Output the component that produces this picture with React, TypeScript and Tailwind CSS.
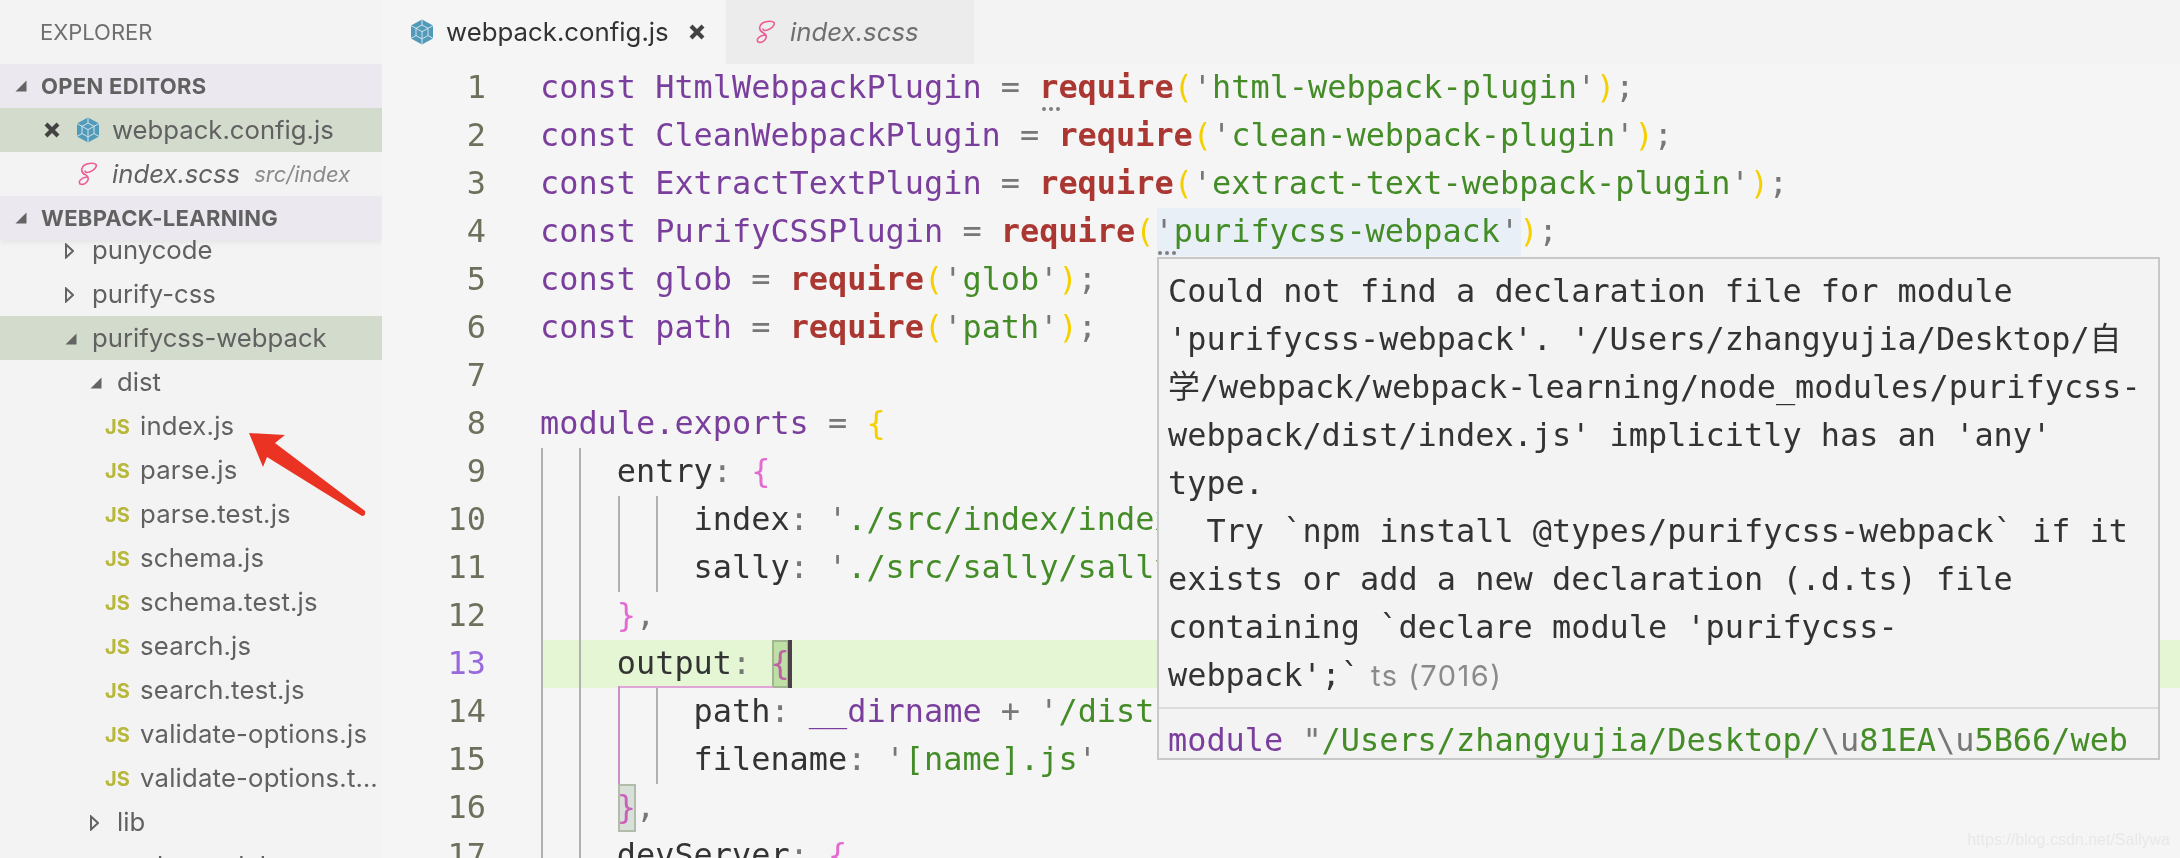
import React from "react";

const MONO = { fontFamily: '"DejaVu Sans Mono", "Noto Sans CJK SC", monospace' };

type Tok = [string, string];
const P = "text-[#7a3e9d]";
const G = "text-[#777777]";
const R = "text-[#aa3731] font-bold";
const S = "text-[#448c27]";
const Y = "text-[#f5d000]";
const K = "text-[#e36ad0]";
const D = "text-[#333333]";

const req = (name: string): Tok[] => [
  ["require", R],
  ["(", Y],
  ["'", G],
  [name, S],
  ["'", G],
  [")", Y],
  [";", G],
];

const decl = (a: string, name: string): Tok[] => [
  ["const ", P],
  [a, P],
  [" = ", G],
  ...req(name),
];

const lines: Tok[][] = [
  decl("HtmlWebpackPlugin", "html-webpack-plugin"),
  decl("CleanWebpackPlugin", "clean-webpack-plugin"),
  decl("ExtractTextPlugin", "extract-text-webpack-plugin"),
  decl("PurifyCSSPlugin", "purifycss-webpack"),
  decl("glob", "glob"),
  decl("path", "path"),
  [],
  [["module.exports", P], [" = ", G], ["{", Y]],
  [["    entry", D], [": ", G], ["{", K]],
  [["        index", D], [": ", G], ["'", G], ["./src/index/index.js", S], ["'", G], [",", G]],
  [["        sally", D], [": ", G], ["'", G], ["./src/sally/sally.js", S], ["'", G]],
  [["    ", D], ["}", K], [",", G]],
  [["    output", D], [": ", G], ["{", K]],
  [["        path", D], [": ", G], ["__dirname", P], [" + ", G], ["'", G], ["/dist", S], ["'", G], [",", G]],
  [["        filename", D], [": ", G], ["'", G], ["[name].js", S], ["'", G]],
  [["    ", D], ["}", K], [",", G]],
  [["    devServer", D], [": ", G], ["{", K]],
];

const guides: Record<number, string[]> = {
  9: ["left-0", "left-[38px]"],
  10: ["left-0", "left-[38px]", "left-[77px]", "left-[115px]"],
  11: ["left-0", "left-[38px]", "left-[77px]", "left-[115px]"],
  12: ["left-0", "left-[38px]"],
  13: ["left-0", "left-[38px]"],
  14: ["left-0", "left-[38px]", "left-[115px]"],
  15: ["left-0", "left-[38px]", "left-[115px]"],
  16: ["left-0", "left-[38px]"],
  17: ["left-0", "left-[38px]"],
};

function WebpackIcon() {
  return (
    <svg width="24" height="26" viewBox="0 0 24 26" className="shrink-0">
      <path d="M12 .5 23 6.600v12.800L12 25.500 1 19.400V6.600Z" fill="#519aba" />
      <path d="M12 6 18 9.300v7.200L12 20l-6-3.500V9.300ZM6 9.300l6 3.400 6-3.400M12 12.700V20M1 6.600 6 9.300M23 6.600 18 9.300M1 19.400 6 16.500M23 19.400l-5-2.900M12 .5V6M12 20v5.500" fill="none" stroke="#d3e4eb" strokeWidth="1" />
    </svg>
  );
}

function SassIcon() {
  return (
    <svg width="20" height="24" viewBox="0 0 20 24" className="shrink-0" fill="none" stroke="#ed5c94" strokeWidth="1.6" strokeLinecap="round">
      <path d="M6 12C2.500 9.500 3 5 7 2.800 10.500 1 16.500.6 18 2.500c1.300 2-2 6-6.500 7.600C8.500 11 7 10.200 7 9" />
      <path d="M6 12c3.500 1.600 5 3.200 4 6-.8 2.600-4 4.800-7 4.300C1 22 .8 19.500 2.500 17.800 4 16.300 6.500 15.200 9 15" />
    </svg>
  );
}

function Close() {
  return (
    <svg width="16" height="16" viewBox="0 0 16 16" className="shrink-0">
      <path d="M2 2 14 14M14 2 2 14" stroke="#424242" strokeWidth="4.200" />
    </svg>
  );
}

function Open() {
  return (
    <svg width="12" height="12" viewBox="0 0 12 12" className="shrink-0">
      <path d="M11.500 .5v11H.5Z" fill="#646465" />
    </svg>
  );
}

function Closed() {
  return (
    <svg width="9" height="16" viewBox="0 0 9 16" className="shrink-0">
      <path d="M1 1.500 8 8 1 14.500Z" fill="none" stroke="#646465" strokeWidth="2" />
    </svg>
  );
}

function Band({ label, shadow }: { label: string; shadow?: boolean }) {
  return (
    <div className={`relative z-10 h-11 shrink-0 flex items-center bg-[#ece8ef] ${shadow ? "shadow-[0_3px_5px_rgba(0,0,0,0.05)]" : ""}`}>
      <div className="w-[41px] pl-[15px] flex"><Open /></div>
      <span className="text-[22px] font-bold text-[#616161] tracking-[0.3px]">{label}</span>
    </div>
  );
}

function Js() {
  return <span className="w-[35px] shrink-0 text-[20px] font-bold text-[#b7b73b]">JS</span>;
}

function FileRow({ name }: { name: string }) {
  return (
    <div className="h-11 shrink-0 flex items-center pl-[105px] pt-px text-[#616161]">
      <Js />
      <span className="whitespace-nowrap tracking-[0.2px]">{name}</span>
    </div>
  );
}

function Folder({ name, open, depth, selected }: { name: string; open?: boolean; depth: 1 | 2; selected?: boolean }) {
  return (
    <div className={`h-11 shrink-0 flex items-center pt-px text-[#616161] ${selected ? "bg-[#d3dbcd]" : ""} ${depth === 1 ? "pl-[65px]" : "pl-[90px]"}`}>
      <div className="w-[27px] shrink-0 flex">{open ? <Open /> : <Closed />}</div>
      <span>{name}</span>
    </div>
  );
}

const files = ["index.js", "parse.js", "parse.test.js", "schema.js", "schema.test.js", "search.js", "search.test.js", "validate-options.js", "validate-options.t…"];

function Sidebar() {
  return (
    <aside className="w-[382px] shrink-0 h-full flex flex-col bg-[#f3f3f3] overflow-hidden text-[25.7px]" style={{ fontFamily: 'Inter, "Liberation Sans", sans-serif' }}>
      <div className="h-16 shrink-0 flex items-center pl-[40px] text-[22px] text-[#6f6f6f]">EXPLORER</div>
      <Band label="OPEN EDITORS" />
      <div className="h-11 shrink-0 flex items-center bg-[#d3dbcd] pl-11 text-[#616161]">
        <Close />
        <div className="ml-[16px] mr-[12px] flex"><WebpackIcon /></div>
        <span>webpack.config.js</span>
      </div>
      <div className="h-11 shrink-0 flex items-center pl-[78px] text-[#616161]">
        <SassIcon />
        <span className="ml-[14px] italic">index.scss</span>
        <span className="ml-3.5 italic text-[22px] text-[#8a8a8a]">src/index</span>
      </div>
      <Band label="WEBPACK-LEARNING" shadow />
      <div className="-mt-3 flex flex-col">
        <Folder name="punycode" depth={1} />
        <Folder name="purify-css" depth={1} />
        <Folder name="purifycss-webpack" depth={1} open selected />
        <Folder name="dist" depth={2} open />
        {files.map((f) => <FileRow key={f} name={f} />)}
        <Folder name="lib" depth={2} />
        <Folder name="node_modules" depth={2} />
      </div>
    </aside>
  );
}

function Tabs() {
  return (
    <div className="h-16 shrink-0 flex bg-[#f3f3f3] text-[25.8px]" style={{ fontFamily: 'Inter, "Liberation Sans", sans-serif' }}>
      <div className="w-[344px] flex items-center bg-[#f5f5f5] pl-[28px] text-[#333333]">
        <WebpackIcon />
        <span className="ml-[12px]">webpack.config.js</span>
        <div className="ml-[20px] flex"><Close /></div>
      </div>
      <div className="w-[248px] flex items-center bg-[#ececec] pl-[30px] text-[#6f6f6f]">
        <SassIcon />
        <span className="ml-[14px] italic">index.scss</span>
      </div>
    </div>
  );
}

function CodeLine({ n, toks }: { n: number; toks: Tok[] }) {
  const active = n === 13;
  return (
    <div className="h-12 flex leading-[46px]">
      <div className={`w-[104px] shrink-0 text-right ${active ? "text-[#9769dc]" : "text-[#6d705b]"}`}>{n}</div>
      <div className={`relative ml-[55px] grow whitespace-pre ${active ? "bg-[#e4f6d4]" : ""}`}>
        {(guides[n] || []).map((g) => (
          <span key={g} className={`absolute top-0 bottom-0 w-0.5 bg-[#b0b0b0] ${g}`} />
        ))}
        <span className="relative -left-px">
          {toks.map((t, i) => <span key={i} className={t[1]}>{t[0]}</span>)}
        </span>
      </div>
    </div>
  );
}

function Dots({ cls }: { cls: string }) {
  return (
    <div className={`absolute flex gap-[3px] ${cls}`}>
      <span className="size-1 rounded-full bg-[#7f7f7f]" />
      <span className="size-1 rounded-full bg-[#7f7f7f]" />
      <span className="size-1 rounded-full bg-[#7f7f7f]" />
    </div>
  );
}

function Hover() {
  return (
    <div className="absolute z-20 left-[775px] top-[193px] w-[1003px] h-[503px] overflow-hidden border-2 border-[#c8c8c8] bg-[#f3f3f3] text-[#333333]">
      <div className="pl-[9px] pt-[8px] h-[448px] whitespace-pre">
        <div>Could not find a declaration file for module</div>
        <div>{"'purifycss-webpack'. '/Users/zhangyujia/Desktop/自"}</div>
        <div>{"学/webpack/webpack-learning/node_modules/purifycss-"}</div>
        <div>{"webpack/dist/index.js' implicitly has an 'any'"}</div>
        <div>type.</div>
        <div>{"  Try `npm install @types/purifycss-webpack` if it"}</div>
        <div>exists or add a new declaration (.d.ts) file</div>
        <div>{"containing `declare module 'purifycss-"}</div>
        <div>
          {"webpack';`"}
          <span className="ml-[11px] text-[#8a8a8a] text-[29px] tracking-[1.5px]" style={{ fontFamily: "Inter, sans-serif" }}>ts (7016)</span>
        </div>
      </div>
      <div className="h-0.5 bg-[#dcdcdc]" />
      <div className="pl-[9px] pt-[7px] whitespace-pre">
        <span className={P}>module</span>{" "}
        <span className={G}>"</span>
        <span className={S}>/Users/zhangyujia/Desktop/</span>
        <span className={G}>\u</span>
        <span className={S}>81EA</span>
        <span className={G}>\u</span>
        <span className={S}>5B66/web</span>
      </div>
    </div>
  );
}

function Editor() {
  return (
    <main className="grow min-w-0 h-full flex flex-col bg-[#f5f5f5]">
      <Tabs />
      <div className="relative grow overflow-hidden text-[31.9px] leading-[48px]" style={MONO}>
        {/* selection behind 'purifycss-webpack' */}
        <div className="absolute left-[775px] top-[144px] w-[364px] h-12 bg-[#e8eff7]" />
        <div className="relative">
          {lines.map((t, i) => <CodeLine key={i} n={i + 1} toks={t} />)}
        </div>
        {/* bracket matches and cursor */}
        <div className="absolute left-[390px] top-[576px] w-[17px] h-12 border-2 border-[#b4bcae] bg-[#b9d8a4]/60 mix-blend-multiply" />
        <div className="absolute left-[406px] top-[576px] w-1 h-12 bg-[#4e4048]" />
        <div className="absolute left-[236px] top-[720px] w-[18px] h-12 border-2 border-[#b9c4b2] bg-[#cfdccf]/60 mix-blend-multiply" />
        <div className="absolute left-[236px] top-[622px] w-[155px] h-0.5 bg-[#dfa6d6]" />
        <div className="absolute left-[236px] top-[622px] w-0.5 h-[98px] bg-[#c98fc6]" />
        <Dots cls="left-[660px] top-[43px]" />
        <Dots cls="left-[776px] top-[187px]" />
        <Hover />
      </div>
    </main>
  );
}

export default function App() {
  return (
    <div className="relative flex h-[858px] w-[2180px] overflow-hidden">
      <Sidebar />
      <Editor />
      <svg className="absolute left-0 top-0 z-30" width="400" height="540" viewBox="0 0 400 540">
        <path d="M249 433 285 435 275 443 365 511Q366 516 362 516L267 457 263 467Z" fill="#ea3323" />
      </svg>
      <div className="absolute z-30 right-[10px] bottom-[6px] text-[16px] text-[#e8e8e8]" style={{ fontFamily: '"Liberation Sans", sans-serif' }}>
        https://blog.csdn.net/Sallywa
      </div>
    </div>
  );
}
